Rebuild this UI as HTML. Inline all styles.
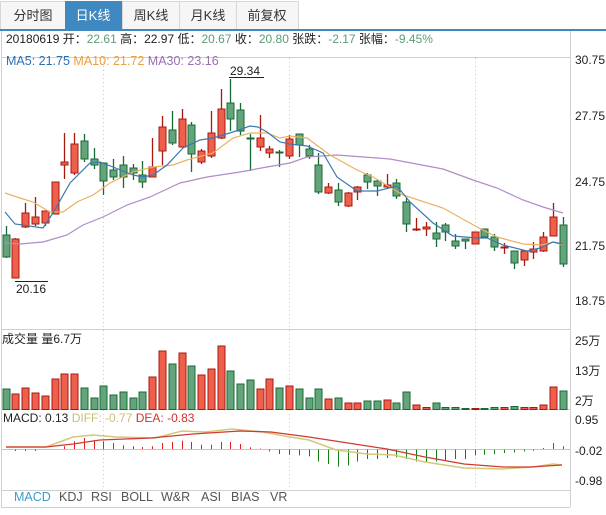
<!DOCTYPE html>
<html><head><meta charset="utf-8"><style>
body{margin:0;width:606px;height:510px;overflow:hidden;background:#fff;font-family:"Liberation Sans","Noto Sans CJK SC",sans-serif;}
</style></head><body>
<svg id="s" width="606" height="510" xmlns="http://www.w3.org/2000/svg" font-family="Liberation Sans, Noto Sans CJK SC, sans-serif">
<rect x="0" y="0" width="606" height="510" fill="#fff"/>
<g font-size="13" text-anchor="middle">
<rect x="0.5" y="1.5" width="65" height="28" fill="#f6f6f6" stroke="#d8d8d8"/>
<rect x="65" y="1" width="57" height="29" fill="#3f88c0"/>
<rect x="122.5" y="1.5" width="57" height="28" fill="#f6f6f6" stroke="#d8d8d8"/>
<rect x="179.5" y="1.5" width="57" height="28" fill="#f6f6f6" stroke="#d8d8d8"/>
<rect x="236.5" y="1.5" width="62" height="28" fill="#f6f6f6" stroke="#d8d8d8"/>
<text x="33" y="20" fill="#333">分时图</text>
<text x="93" y="20" fill="#fff">日K线</text>
<text x="151" y="20" fill="#333">周K线</text>
<text x="208" y="20" fill="#333">月K线</text>
<text x="267" y="20" fill="#333">前复权</text>
</g>
<rect x="0" y="29" width="606" height="2" fill="#3f88c0"/>
<g stroke="#cfcfcf" fill="none">
<line x1="1.5" y1="31" x2="1.5" y2="507"/>
<line x1="570.5" y1="31" x2="570.5" y2="507"/>
<line x1="1" y1="57.5" x2="570" y2="57.5"/>
<line x1="1" y1="329.5" x2="570" y2="329.5"/>
<line x1="1" y1="409.5" x2="570" y2="409.5"/>
<line x1="1" y1="490.5" x2="570" y2="490.5"/>
<line x1="1" y1="507.5" x2="570" y2="507.5"/>
</g>
<g stroke="#c8c8c8" stroke-dasharray="1,3">
<line x1="103.5" y1="58" x2="103.5" y2="490"/>
<line x1="289.5" y1="58" x2="289.5" y2="490"/>
<line x1="475.5" y1="58" x2="475.5" y2="490"/>
</g>
<text x="6" y="43" font-size="12" fill="#222">20180619 开：<tspan fill="#5a9e72">22.61</tspan> 高：22.97 低：<tspan fill="#5a9e72">20.67</tspan> 收：<tspan fill="#5a9e72">20.80</tspan> 张跌：<tspan fill="#5a9e72">-2.17</tspan> 张幅：<tspan fill="#5a9e72">-9.45%</tspan></text>
<text x="6" y="65" font-size="12.5" fill="#2f6fb0">MA5: 21.75 <tspan fill="#e8a040">MA10: 21.72</tspan> <tspan fill="#9a70b0">MA30: 23.16</tspan></text>
<g font-size="12" fill="#222">
<text x="575" y="64">30.75</text>
<text x="575" y="120">27.75</text>
<text x="575" y="186">24.75</text>
<text x="575" y="250">21.75</text>
<text x="575" y="305">18.75</text>
<text x="575" y="345">25万</text>
<text x="575" y="375">13万</text>
<text x="575" y="405">2万</text>
<text x="575" y="424">0.95</text>
<text x="575" y="455">-0.02</text>
<text x="575" y="485">-0.98</text>
<text x="2" y="343" fill="#222">成交量 量6.7万</text>
<text x="3" y="422">MACD: 0.13 <tspan fill="#c8c070">DIFF: -0.77</tspan> <tspan fill="#d03030">DEA: -0.83</tspan></text>
<text x="230" y="75">29.34</text>
<text x="16" y="293">20.16</text>
</g>
<line x1="229" y1="77.5" x2="264" y2="77.5" stroke="#222"/>
<line x1="15" y1="281.5" x2="48" y2="281.5" stroke="#222"/>
<g font-size="12.5" fill="#555">
<text x="14" y="501" fill="#3a9ad0">MACD</text>
<text x="59" y="501">KDJ</text>
<text x="91" y="501">RSI</text>
<text x="121" y="501">BOLL</text>
<text x="161" y="501">W&amp;R</text>
<text x="201" y="501">ASI</text>
<text x="231" y="501">BIAS</text>
<text x="270" y="501">VR</text>
</g>
<g id="c"></g>
</svg>
<script>
var C=[['G',235,257,226,258],['R',239,278,238,278],['R',213,227,203,228],['R',217,224,197,226],['R',211,223,211,226],['R',182,214,182,214],['R',162,165,133,179],['R',144,173,133,175],['G',141,159,134,162],['G',159,165,148,169],['G',163,181,163,195],['G',170,177,159,180],['G',165,177,156,188],['G',168,173,164,180],['G',175,182,161,188],['R',167,177,138,177],['R',127,151,116,165],['G',130,143,111,145],['R',119,147,109,147],['G',125,154,122,172],['R',151,162,149,164],['R',133,156,111,158],['R',109,138,89,139],['G',103,119,79,131],['G',110,131,103,135],['G',138,139,134,171],['R',138,147,115,151],['R',149,153,146,158],['G',152,153,150,167],['R',139,156,135,159],['G',134,145,134,157],['G',149,156,145,159],['G',165,192,153,194],['R',187,193,183,194],['G',190,202,183,206],['R',193,206,192,207],['R',187,192,186,200],['G',175,182,173,189],['G',181,186,179,196],['R',185,187,174,189],['G',183,196,179,199],['G',202,224,198,232],['R',229,230,218,231],['R',227,229,222,236],['G',233,239,222,247],['G',225,232,223,241],['G',241,246,234,249],['G',239,241,239,249],['R',232,244,232,244],['G',229,237,229,237],['G',237,247,234,251],['R',247,248,243,254],['G',251,263,251,269],['R',251,260,251,266],['R',249,252,242,259],['R',237,251,232,252],['R',217,236,203,236],['G',225,264,217,267]];
var V=[389,394,388,393,396,379,374,374,388,398,386,395,392,398,392,377,351,364,353,366,375,369,346,371,384,380,389,379,388,386,389,398,389,399,398,403,403,401,401,400,403,392,405,407.5,403,407.5,407.5,408.5,408.5,408.5,407.5,407.5,406.5,407.5,407.5,405,387,391];
var M={1:-2,2:-2,3:-2,6:2.7,7:7.8,8:11,9:8.8,10:7.8,11:6,12:3.7,13:2.7,14:2,15:2.7,16:6,17:7,18:8.4,19:7,20:4.4,21:4.4,22:7,23:7,24:5,25:1.7,26:0.5,27:-2.4,28:-5,29:-5.7,30:-6.4,31:-7.4,32:-12.5,33:-15,34:-17.6,35:-16.5,36:-12.5,37:-10,38:-10,39:-9,40:-8.4,41:-10,42:-12.5,43:-13,44:-12.5,45:-12,46:-10,47:-10,48:-6.4,49:-5.7,50:-5,51:-4,52:-3.4,53:-2.4,54:-1.7,55:1,56:6,57:2.7};
var h='';
for(var i=0;i<58;i++){var x=5.7+9.77*i,c=C[i],R=c[0]=='R';var f=R?'#ee5f4c':'#64a47a',s=R?'#a81a10':'#176a37';
var cx=Math.round(x)+0.5;
h+='<line x1="'+cx+'" y1="'+c[3]+'" x2="'+cx+'" y2="'+c[4]+'" stroke="'+s+'" stroke-width="1.3"/>';
var bh=Math.max(c[2]-c[1],1);
h+='<rect x="'+(cx-3.5)+'" y="'+c[1]+'" width="7" height="'+bh+'" fill="'+f+'" stroke="'+s+'" stroke-width="1"/>';
h+='<rect x="'+(cx-3.5)+'" y="'+V[i]+'" width="7" height="'+(409.5-V[i])+'" fill="'+f+'" stroke="'+s+'" stroke-width="1"/>';
if(M[i]){var m=M[i];h+='<line x1="'+cx+'" y1="449" x2="'+cx+'" y2="'+(449-m)+'" stroke="'+(m>0?'#e02020':'#108010')+'" stroke-width="1"/>';}
}
function pl(p,col,w){return '<polyline points="'+p+'" fill="none" stroke="'+col+'" stroke-width="'+(w||1.2)+'"/>';}
h+=pl('5,243 20,244 43,242 67,235 83,225 103,217 127,205 150,197 180,183 207,177 240,172 267,167 290,163 307,157 337,155 390,159 443,169 473,180 497,188 523,200 543,207 563,213','#b08cc8');
h+=pl('5,193 20,198 33,202 50,212 63,212 77,202 93,195 110,183 133,172 153,167 173,165 187,160 213,153 233,138 250,133 267,133 280,138 290,136 307,138 330,155 357,170 373,177 403,195 443,208 477,227 497,237 523,244 543,245 553,242 563,245','#ecb060');
h+=pl('5,212 15,224 43,228 53,213 70,183 90,163 100,162 113,167 133,175 143,177 153,175 167,165 183,148 200,140 213,138 233,132 250,126 258,127 267,132 280,142 290,144 307,146 323,153 337,177 357,191 377,191 397,186 410,202 433,223 453,236 477,238 487,238 503,245 527,251 540,248 553,242 563,244','#3a78b0');
h+='<line x1="2" y1="449.5" x2="570" y2="449.5" stroke="#b0b0b0" stroke-width="0.8"/>';
h+=pl('6,447 46,447 73,437 93,435 116,437 155,438 182,431 205,432 232,429 263,432 290,437 309,440 336,450 367,454 394,455 425,462 464,468 503,469 533,467 553,464 562,465','#d4c878',1.5);
h+=pl('6,447 46,447 73,444 100,440 151,438 193,434 240,431 271,432 309,437 348,443 387,449 425,457 464,464 503,467 530,467 562,465','#d03a30',1.3);
document.getElementById('c').innerHTML=h;
</script>
</body></html>
